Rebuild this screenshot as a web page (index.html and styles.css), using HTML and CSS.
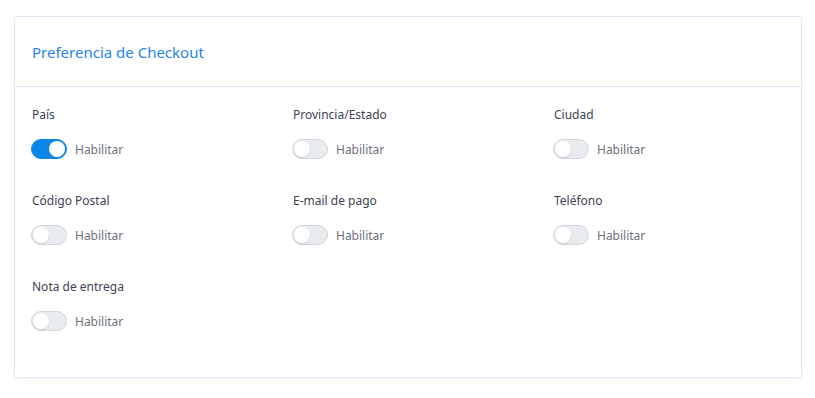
FILE: index.html
```html
<!DOCTYPE html>
<html lang="es">
  <head>
    <meta charset="UTF-8" />
    <meta name="viewport" content="width=device-width, initial-scale=1.0" />
    <title>Preferencia de Checkout</title>
    <link rel="stylesheet" href="styles.css">
  </head>
  <body>
    <div class="card">
      <div class="card-header">
        <h2>Preferencia de Checkout</h2>
      </div>
      <div class="card-body">
        <div class="field">
          <label>País</label>
          <div class="switch on"><span class="track"></span>Habilitar</div>
        </div>
        <div class="field">
          <label>Provincia/Estado</label>
          <div class="switch"><span class="track"></span>Habilitar</div>
        </div>
        <div class="field">
          <label>Ciudad</label>
          <div class="switch"><span class="track"></span>Habilitar</div>
        </div>
        <div class="field">
          <label>Código Postal</label>
          <div class="switch"><span class="track"></span>Habilitar</div>
        </div>
        <div class="field">
          <label>E-mail de pago</label>
          <div class="switch"><span class="track"></span>Habilitar</div>
        </div>
        <div class="field">
          <label>Teléfono</label>
          <div class="switch"><span class="track"></span>Habilitar</div>
        </div>
        <div class="field">
          <label>Nota de entrega</label>
          <div class="switch"><span class="track"></span>Habilitar</div>
        </div>
      </div>
    </div>
  </body>
</html>
```

FILE: styles.css
```css
body {
  margin: 0;
  padding: 16px 13px 20px 14px;
  background-color: #ffffff;
  font-family: "Noto Sans", "Open Sans", sans-serif;
  color: #3f4254;
}
.card {
  border: 1px solid #e4e4f7;
  border-radius: 3px;
  box-shadow: 0 2px 4px rgba(0, 0, 0, 0.03);
}
.card-header {
  height: 69px;
  padding: 0 17px;
  display: flex;
  align-items: center;
  border-bottom: 1px solid #e4e4f7;
}
.card-header h2 {
  margin: 0;
  font-size: 15px;
  font-weight: 400;
  color: #2a86e3;
}
.card-body {
  display: grid;
  grid-template-columns: 261px 261px 1fr;
  row-gap: 33px;
  padding: 19px 17px 46px 16px;
}
.field label {
  display: block;
  font-size: 12px;
  color: #3f4254;
  line-height: 18px;
  margin-bottom: 15px;
}
.field label,
.switch {
  padding-left: 1px;
}
.switch {
  display: flex;
  align-items: center;
  gap: 8px;
  height: 20px;
  font-size: 12px;
  color: #6c727d;
}
.switch {
  padding-left: 0;
}
.track {
  position: relative;
  width: 34px;
  height: 18px;
  border: 1px solid #d3d7dd;
  border-radius: 10px;
  background-color: #e9ecef;
}
.track::after {
  content: "";
  position: absolute;
  top: 1px;
  left: 1px;
  width: 16px;
  height: 16px;
  border-radius: 50%;
  background-color: #ffffff;
  box-shadow: 0 1px 2px rgba(0, 0, 0, 0.12);
}
.switch.on .track {
  border-color: #0d86ea;
  background-color: #0d86ea;
}
.switch.on .track::after {
  left: 17px;
  box-shadow: none;
}
```
